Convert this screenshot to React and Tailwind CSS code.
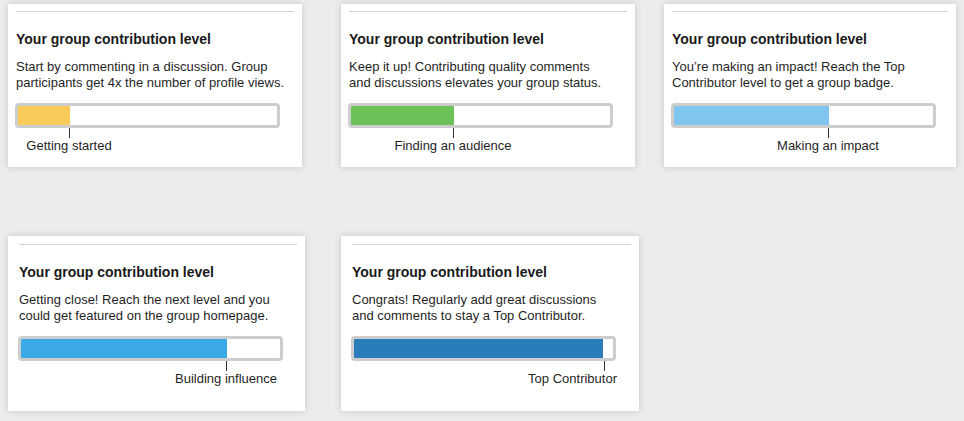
import React from 'react';

// One card per contribution level
const levels = [
  {
    lines: ['Start by commenting in a discussion. Group', 'participants get 4x the number of profile views.'],
    label: 'Getting started',
    fill: 52,
    color: 'bg-[#f8ca5a]',
  },
  {
    lines: ['Keep it up! Contributing quality comments', 'and discussions elevates your group status.'],
    label: 'Finding an audience',
    fill: 103,
    color: 'bg-[#6cc158]',
  },
  {
    lines: ['You\u2019re making an impact! Reach the Top', 'Contributor level to get a group badge.'],
    label: 'Making an impact',
    fill: 155,
    color: 'bg-[#80c5ee]',
  },
  {
    lines: ['Getting close! Reach the next level and you', 'could get featured on the group homepage.'],
    label: 'Building influence',
    fill: 206,
    color: 'bg-[#3ba9e5]',
  },
  {
    lines: ['Congrats! Regularly add great discussions', 'and comments to stay a Top Contributor.'],
    label: 'Top Contributor',
    fill: 249,
    color: 'bg-[#2b7db9]',
    alignEnd: true,
  },
];

function LevelCard({ level, className }) {
  return (
    <div className={`bg-white shadow-[0_0_7px_rgba(0,0,0,0.16)] px-2 ${className}`}>
      <div className="border-t border-[#d2d2d2]" />
      <h2 className="text-[14px] font-bold text-[#1a1a1a] leading-[16px] mt-[19px]">
        Your group contribution level
      </h2>
      <p className="text-[13px] leading-[16px] text-[#1f1f1f] mt-[12px] whitespace-nowrap">
        {level.lines[0]}
        <br />
        {level.lines[1]}
      </p>
      <div className="-ml-px mt-[12px] w-[265px] h-[25px] border-[3px] border-[#cdcdcd] rounded-[4px] bg-white overflow-hidden">
        <div className={`h-full ${level.color}`} style={{ width: level.fill }} />
      </div>
      {level.alignEnd ? (
        <div className="w-[265px] flex flex-col items-end">
          <div className="w-px h-[10px] bg-[#333]" style={{ marginRight: 265 - level.fill - 4 }} />
          <span className="text-[13px] leading-[16px] text-[#1f1f1f]">{level.label}</span>
        </div>
      ) : (
        <div className="flex flex-col items-start" style={{ marginLeft: level.fill + 1 }}>
          <div className="w-px h-[10px] bg-[#333]" />
          <span className="text-[13px] leading-[16px] text-[#1f1f1f] whitespace-nowrap -translate-x-1/2">
            {level.label}
          </span>
        </div>
      )}
    </div>
  );
}

export default function App() {
  return (
    <div className="w-[964px] h-[421px] bg-[#ececec] overflow-hidden font-['Liberation_Sans',Arial,sans-serif] pt-[4px] pl-[8px]">
      <div className="flex items-start">
        <LevelCard level={levels[0]} className="w-[294px] h-[163px] pt-[7px]" />
        <LevelCard level={levels[1]} className="w-[294px] h-[163px] pt-[7px] ml-[39px]" />
        <LevelCard level={levels[2]} className="w-[292px] h-[163px] pt-[7px] ml-[29px]" />
      </div>
      <div className="flex items-start mt-[69px]">
        <LevelCard level={levels[3]} className="w-[297px] h-[175px] pt-[8px] pl-[11px]" />
        <LevelCard level={levels[4]} className="w-[298px] h-[175px] pt-[8px] pl-[11px] ml-[36px]" />
      </div>
    </div>
  );
}
